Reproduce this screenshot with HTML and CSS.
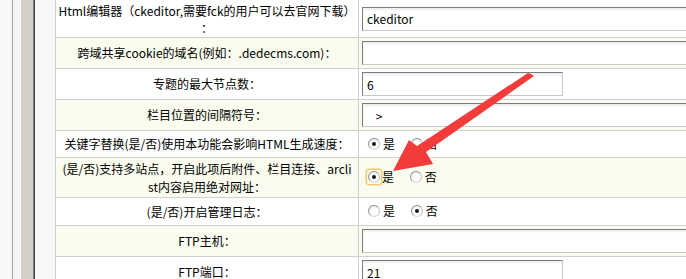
FILE: index.html
```html
<!DOCTYPE html>
<html lang="zh-CN">
<head>
    <meta charset="UTF-8">
    <meta name="viewport" content="width=device-width, initial-scale=1.0">
    <title>系统基本参数</title>
    <link rel="stylesheet" href="styles.css">
</head>
<body>
    <div class="frame">
        <div class="side">
            <div class="side-pad"></div>
            <div class="side-line"></div>
            <div class="side-pad2"></div>
            <div class="side-hl"></div>
            <div class="side-bar"></div>
            <div class="side-shadow"></div>
            <div class="side-dark"></div>
            <div class="side-gap"></div>
        </div>
        <div class="main">
            <table class="config">
                <tr class="row-tall first">
                    <td class="label">Html编辑器（ckeditor,需要fck的用户可以去官网下载）<br>：</td>
                    <td class="value"><input type="text" class="txt long" value="ckeditor"></td>
                </tr>
                <tr class="alt">
                    <td class="label">跨域共享cookie的域名(例如：.dedecms.com)：</td>
                    <td class="value"><input type="text" class="txt long" value=""></td>
                </tr>
                <tr>
                    <td class="label">专题的最大节点数：</td>
                    <td class="value"><input type="text" class="txt short" value="6"></td>
                </tr>
                <tr class="alt">
                    <td class="label">栏目位置的间隔符号：</td>
                    <td class="value"><input type="text" class="txt long sep" value=" > "></td>
                </tr>
                <tr class="row-radio">
                    <td class="label">关键字替换(是/否)使用本功能会影响HTML生成速度：</td>
                    <td class="value">
                        <span class="choice"><span class="radio checked"></span>是</span>
                        <span class="choice"><span class="radio"></span>否</span>
                    </td>
                </tr>
                <tr class="alt row-tall2">
                    <td class="label">(是/否)支持多站点，开启此项后附件、栏目连接、arcli<br>st内容启用绝对网址：</td>
                    <td class="value">
                        <span class="choice"><span class="focus"><span class="radio checked"></span></span>是</span>
                        <span class="choice"><span class="radio"></span>否</span>
                    </td>
                </tr>
                <tr class="row-radio2">
                    <td class="label">(是/否)开启管理日志：</td>
                    <td class="value">
                        <span class="choice"><span class="radio"></span>是</span>
                        <span class="choice"><span class="radio checked"></span>否</span>
                    </td>
                </tr>
                <tr class="alt">
                    <td class="label">FTP主机：</td>
                    <td class="value"><input type="text" class="txt long" value=""></td>
                </tr>
                <tr>
                    <td class="label">FTP端口：</td>
                    <td class="value"><input type="text" class="txt short" value="21"></td>
                </tr>
            </table>
        </div>
    </div>

    <svg class="arrow" width="686" height="279" viewBox="0 0 686 279">
        <polygon points="531,74 534,76 426,152 433,164 393,171 409,140 417,146 528,73" fill="#f23b3b"/>
    </svg>
</body>
</html>
```

FILE: styles.css
```css
body {
    margin: 0;
    font-family: "Noto Sans CJK SC", sans-serif;
    font-size: 12px;
    color: #000;
    background: #f7f7f7;
    overflow: hidden;
}

.frame {
    display: flex;
    height: 279px;
    overflow: hidden;
}

.side {
    display: flex;
    flex-shrink: 0;
}

.side-pad {
    width: 12px;
    background: #f7f7f7;
}

.side-line {
    width: 1px;
    background: #a4a498;
}

.side-pad2 {
    width: 7px;
    background: #f4f4f4;
}

.side-hl {
    width: 1px;
    background: #ffffff;
}

.side-bar {
    width: 12px;
    background: #d4d0c8;
}

.side-shadow {
    width: 1px;
    background: #808080;
}

.side-dark {
    width: 1px;
    background: #404040;
}

.side-gap {
    width: 20px;
    background: #f7f7f7;
}

.main {
    flex-shrink: 0;
}

.config {
    border-collapse: collapse;
    table-layout: fixed;
    width: 760px;
    background: #fff;
}

.config td {
    border: 1px solid #d0d0d0;
    padding: 0;
    height: 30px;
    vertical-align: middle;
    line-height: 18px;
}

.config tr.first td {
    border-top: none;
    height: 37px;
    line-height: 17px;
}

.config tr.alt td {
    background: #f9fcef;
}

.config tr.row-radio td {
    height: 26px;
}

.config tr.row-tall2 td {
    height: 39px;
}

.config tr.row-radio2 td {
    height: 27px;
}

.config td.label {
    width: 302px;
    text-align: center;
}

.config td.value {
    padding-left: 3px;
}

.txt {
    box-sizing: border-box;
    height: 24px;
    margin: 0;
    padding: 0 4px;
    font-family: "Noto Sans CJK SC", sans-serif;
    font-size: 12px;
    color: #000;
    background: #fff;
    border: 1px solid;
    border-color: #7b7b7b #c8c8c8 #c8c8c8 #7b7b7b;
    box-shadow: inset 0 2px 2px rgba(0, 0, 0, 0.07);
    display: block;
}

.txt.sep {
    padding-left: 10px;
}

.txt.long {
    width: 420px;
}

.txt.short {
    width: 201px;
}

.choice {
    display: inline-flex;
    align-items: center;
    margin-left: 6px;
    margin-right: 1px;
}

.choice + .choice {
    margin-left: 12px;
}

.radio {
    box-sizing: border-box;
    width: 12px;
    height: 12px;
    border-radius: 50%;
    border: 1px solid;
    border-color: #8c8c8c #c4c4c4 #d8d8d8 #9a9a9a;
    background: radial-gradient(circle at 60% 60%, #ffffff 30%, #e6e6e0 100%);
    margin-right: 3px;
    position: relative;
}

.radio.checked::after {
    content: "";
    position: absolute;
    left: 3px;
    top: 3px;
    width: 4px;
    height: 4px;
    border-radius: 50%;
    background: #1a1a1a;
}

.focus {
    display: inline-flex;
    padding: 1px;
    margin: -2px 0 -2px -2px;
    border: 1px solid #f0c470;
    border-radius: 3px;
    box-shadow: 0 0 0 1px #fbe3b0;
}

.focus .radio {
    margin-right: 0;
}

.arrow {
    position: absolute;
    left: 0;
    top: 0;
    pointer-events: none;
}
```
